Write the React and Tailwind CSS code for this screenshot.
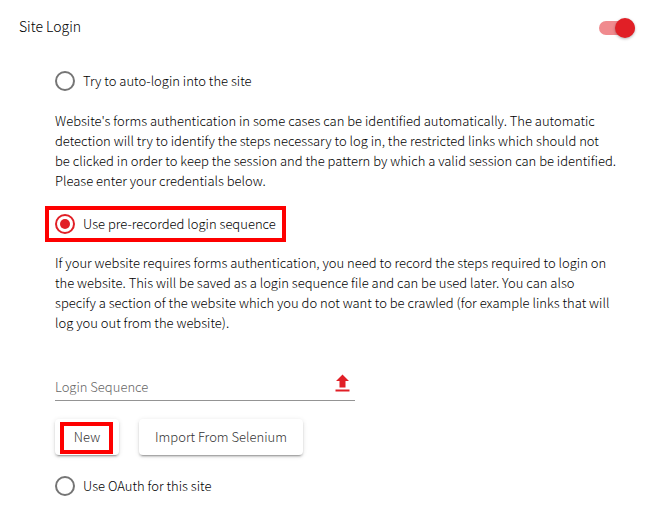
import { useState } from "react";

function Option({ value, label, mode, onSelect, className = "" }) {
  return (
    <label className={`inline-flex cursor-pointer items-center gap-2 ${className}`}>
      <input
        type="radio"
        name="login-mode"
        value={value}
        checked={mode === value}
        onChange={() => onSelect(value)}
        className="grid size-5 shrink-0 appearance-none place-content-center rounded-full border-2 border-[#757575] before:size-2.5 before:rounded-full checked:border-[#e11f26] checked:before:bg-[#e11f26]"
      />
      <span>{label}</span>
    </label>
  );
}

const buttonStyle =
  "relative h-9 rounded bg-white px-4 text-[#333] shadow-[0_3px_1px_-2px_rgba(0,0,0,0.2),0_2px_2px_0_rgba(0,0,0,0.14),0_1px_5px_0_rgba(0,0,0,0.12)]";

export default function App() {
  const [enabled, setEnabled] = useState(true);
  const [mode, setMode] = useState("recorded");

  return (
    <main className="bg-white font-['Noto_Sans_CJK_SC',sans-serif] text-[13px] leading-5 font-light text-black">
      <header className="flex items-center justify-between pt-[18px] pr-[35px] pl-[19px]">
        <label htmlFor="site-login" className="pb-1 text-sm leading-4">
          Site Login
        </label>
        <input
          id="site-login"
          type="checkbox"
          role="switch"
          checked={enabled}
          onChange={(e) => setEnabled(e.target.checked)}
          className="my-[3px] flex h-3.5 w-9 appearance-none items-center rounded-full bg-[#bdbdbd] before:size-5 before:shrink-0 before:rounded-full before:bg-[#fafafa] before:shadow-[0_1px_3px_rgba(0,0,0,0.3)] checked:justify-end checked:bg-[#f08a8e] checked:before:bg-[#e11f26]"
        />
      </header>

      <section className="flex flex-col items-start pt-[33px] pr-[54px] pb-5 pl-[55px]">
        <Option value="auto" label="Try to auto-login into the site" mode={mode} onSelect={setMode} />
        <p className="mt-5">
          Website's forms authentication in some cases can be identified automatically. The automatic
          detection will try to identify the steps necessary to log in, the restricted links which should not
          be clicked in order to keep the session and the pattern by which a valid session can be identified.
          Please enter your credentials below.
        </p>

        <Option
          value="recorded"
          label="Use pre-recorded login sequence"
          mode={mode}
          onSelect={setMode}
          className="mt-[15px] -ml-2.5 h-9 border-4 border-[#fe0000] px-1.5"
        />
        <p className="mt-[11px]">
          If your website requires forms authentication, you need to record the steps required to login on
          the website. This will be saved as a login sequence file and can be used later. You can also
          specify a section of the website which you do not want to be crawled (for example links that will
          log you out from the website).
        </p>

        <div className="mt-9 flex h-8 w-[300px] items-center border-b border-[#949494]">
          <input
            type="text"
            aria-label="Login Sequence"
            placeholder="Login Sequence"
            className="min-w-0 flex-1 pt-1 outline-none placeholder:text-[#666]"
          />
          <button type="button" aria-label="Upload login sequence" className="mr-1 pb-1">
            <svg viewBox="0 0 16 18" className="h-[18px] w-4 fill-[#e11f26]" aria-hidden="true">
              <path d="M7.5 0.5 14 7h-3.5v6.5h-6V7H1zM.5 15.5h14v2H.5z" />
            </svg>
          </button>
        </div>

        <div className="mt-[18px] flex gap-5">
          <button type="button" className={`${buttonStyle} w-16`}>
            New
            <span className="absolute top-[3px] right-1.5 bottom-px left-[5px] border-4 border-[#fe0000]" />
          </button>
          <button type="button" className={buttonStyle}>
            Import From Selenium
          </button>
        </div>

        <Option
          value="oauth"
          label="Use OAuth for this site"
          mode={mode}
          onSelect={setMode}
          className="mt-[21px]"
        />
      </section>
    </main>
  );
}
